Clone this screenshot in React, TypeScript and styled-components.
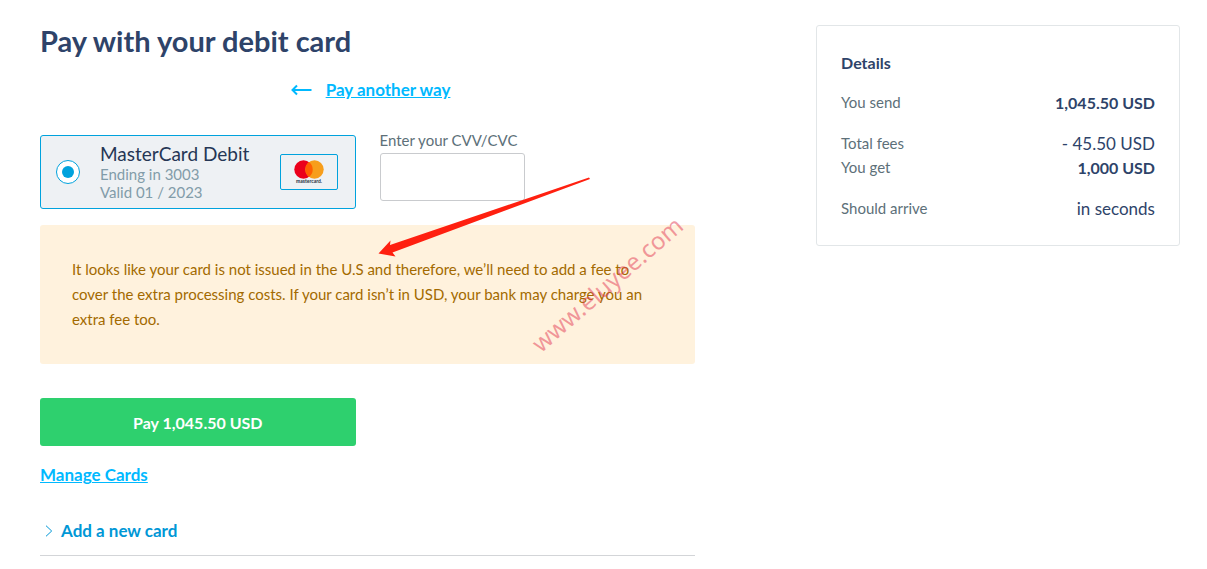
import React from "react";
import styled, { createGlobalStyle } from "styled-components";

const GlobalStyle = createGlobalStyle`
  *, *::before, *::after { box-sizing: border-box; }
  body {
    margin: 0;
    background: #fff;
    color: #2e4369;
    font-family: Lato, "Open Sans", sans-serif;
    font-size: 15px;
    line-height: 24px;
  }
  h1, h2, p, dl, dd { margin: 0; }
`;

const Page = styled.div`
  display: grid;
  grid-template-columns: minmax(0, 9fr) minmax(0, 5fr);
  column-gap: 121px;
  align-items: start;
  padding: 25px 27px 12px 40px;
`;

const Main = styled.main`
  position: relative;
`;

const Title = styled.h1`
  font-size: 29px;
  line-height: 32px;
  font-weight: 700;
`;

const BackRow = styled.div`
  display: flex;
  justify-content: center;
  align-items: center;
  gap: 14px;
  margin-top: 21px;
  padding-left: 6px;
  color: #00b9ff;
`;

const TextLink = styled.a`
  color: #00b9ff;
  font-size: 17px;
  line-height: 24px;
  font-weight: 700;
`;

const CardRow = styled.div`
  display: grid;
  grid-template-columns: 1fr 1fr;
  column-gap: 24px;
  align-items: start;
  margin-top: 33px;
`;

const CardOption = styled.label`
  display: flex;
  align-items: center;
  height: 74px;
  padding: 0 17px 0 15px;
  border: 1px solid #00a2dd;
  border-radius: 3px;
  background: #eef1f4;
`;

const Radio = styled.input`
  appearance: none;
  display: grid;
  place-items: center;
  flex: none;
  width: 24px;
  height: 24px;
  margin: 0 20px 0 0;
  border: 1px solid #00a2dd;
  border-radius: 50%;
  background: #fff;
  &:checked::before {
    content: "";
    width: 12px;
    height: 12px;
    border-radius: 50%;
    background: #00a2dd;
  }
`;

const CardText = styled.span`
  display: flex;
  flex-direction: column;
  flex: 1;
  line-height: 18px;
  color: #829ca9;
`;

const CardName = styled.span`
  font-size: 19px;
  line-height: 22px;
  color: #253655;
`;

const Brand = styled.span`
  display: grid;
  place-items: center;
  width: 58px;
  height: 36px;
  border: 1px solid #00a2dd;
  border-radius: 2px;
`;

const Field = styled.label`
  display: flex;
  flex-direction: column;
  align-items: flex-start;
  color: #5d7079;
  line-height: 18px;
  margin-top: -4px;
`;

const FieldInput = styled.input`
  width: 145px;
  height: 48px;
  margin-top: 4px;
  padding: 0 16px;
  border: 1px solid #c9cbce;
  border-radius: 3px;
  background: #fff;
  font: inherit;
  font-size: 16px;
`;

const Notice = styled.p`
  margin-top: 16px;
  padding: 32px;
  border-radius: 3px;
  background: #fff2dd;
  color: #a36a00;
  line-height: 25px;
`;

const PayButton = styled.button`
  display: block;
  width: calc(50% - 12px);
  height: 48px;
  margin-top: 34px;
  padding: 2px 16px 0;
  border: 0;
  border-radius: 3px;
  background: #2ed06e;
  color: #fff;
  font: inherit;
  font-size: 16px;
  font-weight: 700;
`;

const ManageRow = styled.div`
  margin-top: 17px;
`;

const AddCard = styled.button`
  display: flex;
  align-items: center;
  gap: 8px;
  width: 100%;
  margin-top: 32px;
  padding: 0 0 12px 5px;
  border: 0;
  border-bottom: 1px solid #d3d5d8;
  background: none;
  color: #0097d6;
  font: inherit;
  font-size: 17px;
  font-weight: 700;
`;

const Details = styled.aside`
  padding: 25px 24px;
  border: 1px solid #e2e6e8;
  border-radius: 3px;
`;

const DetailsTitle = styled.h2`
  font-size: 16px;
  line-height: 24px;
  font-weight: 700;
`;

const DetailList = styled.dl`
  margin-top: 15px;
`;

const DetailRow = styled.div<{ $spaced?: boolean }>`
  display: flex;
  justify-content: space-between;
  height: 24px;
  margin-bottom: ${(p) => (p.$spaced ? "17px" : "0")};
`;

const Term = styled.dt`
  color: #5d7079;
`;

const Value = styled.dd<{ $strong?: boolean }>`
  font-size: ${(p) => (p.$strong ? "16px" : "17px")};
  line-height: 26px;
  font-weight: ${(p) => (p.$strong ? 700 : 400)};
`;

const Pointer = styled.svg`
  position: absolute;
  left: 338px;
  top: 151px;
  pointer-events: none;
`;

const Watermark = styled.span`
  position: absolute;
  left: 567px;
  top: 259px;
  transform: translate(-50%, -50%) rotate(-41deg);
  color: rgba(226, 59, 84, 0.5);
  font-family: "Noto Sans", sans-serif;
  font-size: 24px;
  line-height: 32px;
  white-space: nowrap;
  pointer-events: none;
`;

const rows = [
  { term: "You send", value: "1,045.50 USD", strong: true, spaced: true },
  { term: "Total fees", value: "- 45.50 USD" },
  { term: "You get", value: "1,000 USD", strong: true, spaced: true },
  { term: "Should arrive", value: "in seconds" },
];

export default function App() {
  return (
    <>
      <GlobalStyle />
      <Page>
        <Main>
          <Title>Pay with your debit card</Title>
          <BackRow>
            <svg width="21" height="12" viewBox="0 0 21 12" fill="none" stroke="currentColor" strokeWidth="2" aria-hidden="true">
              <path d="M20.5 6H2M6 1.500L1.500 6l4.500 4.500" />
            </svg>
            <TextLink href="#methods">Pay another way</TextLink>
          </BackRow>
          <CardRow>
            <CardOption>
              <Radio type="radio" name="card" defaultChecked />
              <CardText>
                <CardName>MasterCard Debit</CardName>
                <span>Ending in 3003</span>
                <span>Valid 01 / 2023</span>
              </CardText>
              <Brand>
                <svg width="30" height="26" viewBox="0 0 30 26" role="img" aria-label="Mastercard">
                  <circle cx="9.5" cy="10.5" r="9.2" fill="#eb001b" />
                  <circle cx="20.5" cy="10.5" r="9.2" fill="#f79e1b" />
                  <path d="M15 3.1a9.2 9.2 0 0 1 0 14.8a9.2 9.2 0 0 1 0-14.8z" fill="#ff5f00" />
                  <text x="15" y="24" textAnchor="middle" fontSize="5" fontWeight="700" fill="#253040">mastercard.</text>
                </svg>
              </Brand>
            </CardOption>
            <Field>
              Enter your CVV/CVC
              <FieldInput type="text" inputMode="numeric" autoComplete="cc-csc" />
            </Field>
          </CardRow>
          <Notice>
            It looks like your card is not issued in the U.S and therefore, we’ll need to add a fee to cover the extra
            processing costs. If your card isn’t in USD, your bank may charge you an extra fee too.
          </Notice>
          <PayButton type="button">Pay 1,045.50 USD</PayButton>
          <ManageRow>
            <TextLink href="#cards">Manage Cards</TextLink>
          </ManageRow>
          <AddCard type="button">
            <svg width="8" height="12" viewBox="0 0 8 12" fill="none" stroke="currentColor" aria-hidden="true">
              <path d="M1 .7L6.7 6L1 11.3" />
            </svg>
            Add a new card
          </AddCard>
          <Pointer width="214" height="82" viewBox="0 0 214 82" aria-hidden="true">
            <path d="M.5 77.5L12.5 64.5L12 69L211 1.500L212 3L14.500 76.500L17.500 80.500Z" fill="#ff2010" />
          </Pointer>
          <Watermark>www.eluyee.com</Watermark>
        </Main>
        <Details>
          <DetailsTitle>Details</DetailsTitle>
          <DetailList>
            {rows.map((r) => (
              <DetailRow key={r.term} $spaced={r.spaced}>
                <Term>{r.term}</Term>
                <Value $strong={r.strong}>{r.value}</Value>
              </DetailRow>
            ))}
          </DetailList>
        </Details>
      </Page>
    </>
  );
}
